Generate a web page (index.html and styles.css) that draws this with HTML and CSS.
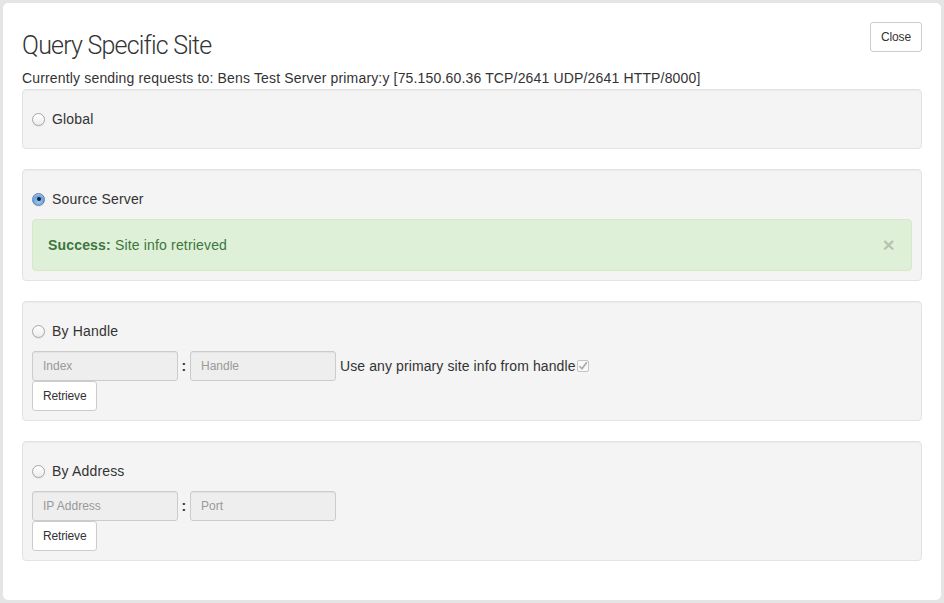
FILE: index.html
```html
<!DOCTYPE html>
<html>
<head>
<meta charset="utf-8">
<title>Query Specific Site</title>
<link rel="stylesheet" href="styles.css">
</head>
<body>
<div class="modal">
  <div class="modal-head">
    <h4 class="title">Query Specific Site</h4>
    <button class="btn">Close</button>
  </div>
  <p class="status">Currently sending requests to: Bens Test Server primary:y [75.150.60.36 TCP/2641 UDP/2641 HTTP/8000]</p>

  <div class="well">
    <label class="radio"><span class="rb"></span>Global</label>
  </div>

  <div class="well">
    <label class="radio"><span class="rb checked"></span>Source Server</label>
    <div class="alert">
      <span><strong>Success:</strong> Site info retrieved</span>
      <span class="x">&times;</span>
    </div>
  </div>

  <div class="well">
    <label class="radio"><span class="rb"></span>By Handle</label>
    <div class="row">
      <input class="field" type="text" placeholder="Index" disabled>
      <span class="colon">:</span>
      <input class="field" type="text" placeholder="Handle" disabled>
      <span class="use">Use any primary site info from handle</span><span class="cb"><svg width="10" height="10" viewBox="0 0 10 10"><path d="M1.5 5.2 L4 7.8 L8.8 1.2" fill="none" stroke="#a8a8a8" stroke-width="1.6"/></svg></span>
    </div>
    <button class="btn">Retrieve</button>
  </div>

  <div class="well">
    <label class="radio"><span class="rb"></span>By Address</label>
    <div class="row">
      <input class="field" type="text" placeholder="IP Address" disabled>
      <span class="colon">:</span>
      <input class="field" type="text" placeholder="Port" disabled>
    </div>
    <button class="btn">Retrieve</button>
  </div>
</div>
</body>
</html>
```
FILE: styles.css
```css
* { box-sizing: border-box; }
html, body { margin: 0; }
body {
  background: #e5e5e5;
  padding: 3px;
  font-family: "Liberation Sans", Arial, sans-serif;
  font-size: 14px;
  line-height: 20px;
  letter-spacing: 0.17px;
  color: #333;
}
.modal {
  background: #fff;
  border-radius: 5px;
  height: 597px;
  width: 938px;
  padding: 19px 19px 20px 19px;
}
.modal-head {
  display: flex;
  justify-content: space-between;
  align-items: flex-start;
}
.title {
  margin: 9px 0 0 0;
  font-family: Roboto, "Liberation Sans", sans-serif;
  font-weight: 300;
  font-size: 25px;
  line-height: 30px;
  letter-spacing: -0.8px;
  color: #333;
}
.btn {
  font-family: "Liberation Sans", Arial, sans-serif;
  font-size: 12px;
  line-height: 18px;
  letter-spacing: -0.15px;
  height: 30px;
  padding: 5px 10px;
  background: #fff;
  border: 1px solid #ccc;
  border-radius: 3px;
  color: #333;
  display: block;
}
.status {
  margin: 7px 0 1px 0;
  line-height: 20px;
  letter-spacing: 0.16px;
}
.well {
  background: #f4f4f4;
  border: 1px solid #e3e3e3;
  border-radius: 4px;
  box-shadow: inset 0 1px 1px rgba(0,0,0,0.04);
  padding: 9px;
  margin-bottom: 20px;
}
.radio {
  display: flex;
  align-items: center;
  margin: 10px 0;
  height: 20px;
  gap: 7px;
}
.rb {
  width: 13px;
  height: 13px;
  border-radius: 50%;
  border: 1px solid #a6a6a6;
  background: linear-gradient(#ffffff, #ececec);
  box-shadow: 0 1px 1px rgba(0,0,0,0.06);
  display: flex;
  align-items: center;
  justify-content: center;
}
.rb.checked {
  border-color: #5d7fa8;
  background: radial-gradient(circle at 50% 70%, #9cc6f2 0%, #6aa2de 55%, #cfe2f7 100%);
}
.rb.checked::after {
  content: "";
  width: 4px;
  height: 4px;
  border-radius: 50%;
  background: #10213a;
}
.alert {
  background: #dff0d8;
  border: 1px solid #d6e9c6;
  border-radius: 4px;
  color: #3c763d;
  padding: 15px 16px 15px 15px;
  display: flex;
  justify-content: space-between;
  align-items: center;
  height: 52px;
}
.alert strong { font-weight: bold; }
.x {
  font-size: 21px;
  font-weight: bold;
  color: rgba(0,0,0,0.2);
  line-height: 20px;
}
.row {
  display: flex;
  align-items: center;
  height: 30px;
}
.field {
  width: 146px;
  height: 30px;
  padding: 5px 10px;
  font-family: "Liberation Sans", Arial, sans-serif;
  font-size: 12px;
  background: #eee;
  border: 1px solid #ccc;
  border-radius: 3px;
  color: #555;
  box-shadow: inset 0 1px 1px rgba(0,0,0,0.05);
}
.field::placeholder { color: #999; }
.colon {
  width: 12px;
  text-align: center;
  font-weight: bold;
}
.use { margin-left: 4px; letter-spacing: 0.1px; }
.cb {
  width: 12px;
  height: 12px;
  border: 1px solid #c4c4c4;
  border-radius: 2px;
  background: #f9f9f9;
  display: flex;
  align-items: center;
  justify-content: center;
  margin-left: 1px;
  margin-top: -1px;
}
```
